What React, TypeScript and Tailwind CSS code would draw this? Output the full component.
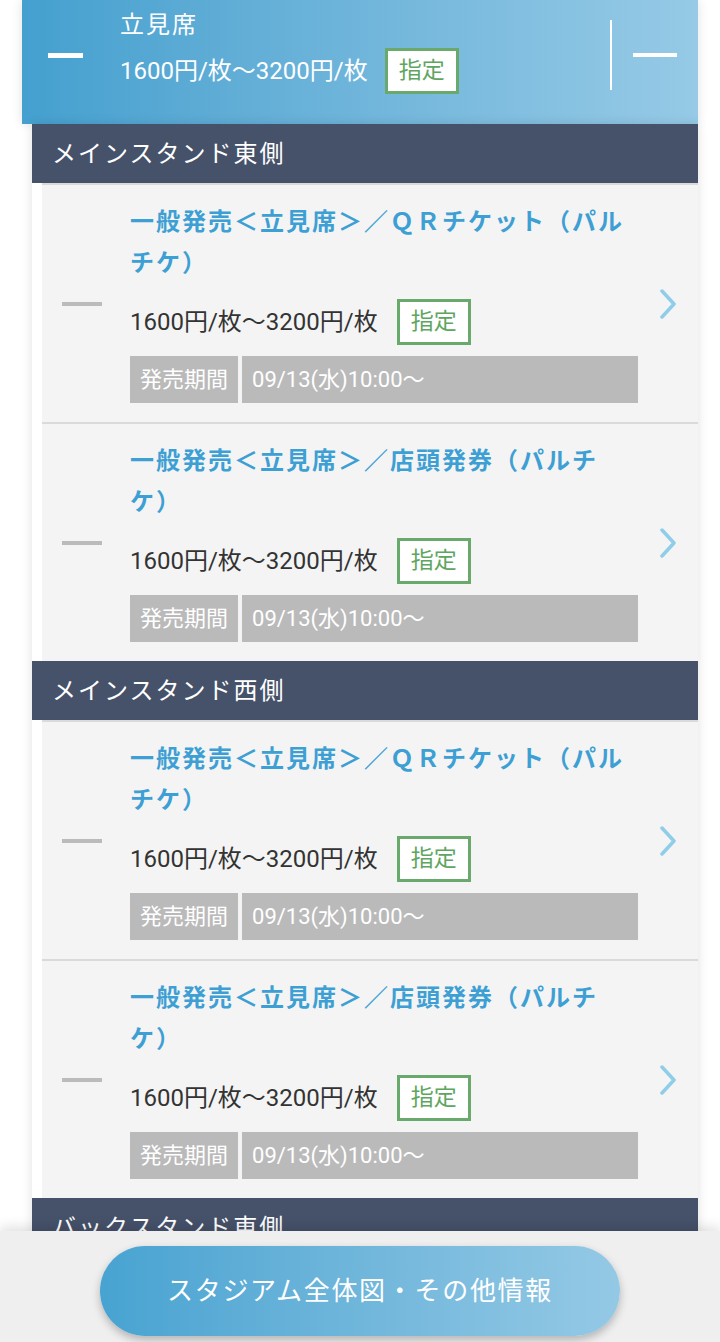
import { ReactNode } from "react";

// ─── Data ───────────────────────────────────────────────────────────────────
const PRICE = "1600円/枚～3200円/枚";
const PERIOD = "09/13(水)10:00～";

const sections = [
    {
        name: "メインスタンド東側",
        items: ["一般発売＜立見席＞／ＱＲチケット（パルチケ）", "一般発売＜立見席＞／店頭発券（パルチケ）"],
    },
    {
        name: "メインスタンド西側",
        items: ["一般発売＜立見席＞／ＱＲチケット（パルチケ）", "一般発売＜立見席＞／店頭発券（パルチケ）"],
    },
    {
        name: "バックスタンド東側",
        items: ["一般発売＜立見席＞／ＱＲチケット（パルチケ）", "一般発売＜立見席＞／店頭発券（パルチケ）"],
    },
];

// ─── Small parts ────────────────────────────────────────────────────────────
function Badge({ children }: { children: ReactNode }) {
    return (
        <span className="flex h-[46px] items-center border-[3px] border-[#69a96b] bg-white px-[11px] text-[23px] text-[#5ea65f]">
            {children}
        </span>
    );
}

function Chevron() {
    return (
        <svg width="18" height="30" viewBox="0 0 18 30" fill="none">
            <polyline points="3,2 15,15 3,28" stroke="#8fcde9" strokeWidth="3.5" strokeLinecap="round" strokeLinejoin="round" />
        </svg>
    );
}

function TicketItem({ title }: { title: string }) {
    return (
        <div className="flex items-center border-t-2 border-[#dadada] bg-[#f4f4f4]">
            <div className="w-[88px] shrink-0 pl-[20px]">
                <div className="h-[4px] w-[40px] bg-[#bbbbbb]" />
            </div>
            <div className="flex-1 pb-[19px] pt-[17px]">
                <p className="pr-[10px] text-[24px] font-bold leading-[41px] tracking-[2px] text-[#3d9fd3]">{title}</p>
                <div className="mt-[15px] flex items-center gap-[19px]">
                    <span className="text-[24px] leading-none text-[#333333]">{PRICE}</span>
                    <Badge>指定</Badge>
                </div>
                <div className="mt-[11px] flex h-[47px] gap-[4px] text-[22px] text-white">
                    <span className="flex items-center bg-[#bababa] px-[10px]">発売期間</span>
                    <span className="flex flex-1 items-center bg-[#bababa] px-[10px]">{PERIOD}</span>
                </div>
            </div>
            <div className="flex w-[60px] shrink-0 justify-center">
                <Chevron />
            </div>
        </div>
    );
}

// ─── Page ───────────────────────────────────────────────────────────────────
export default function App() {
    return (
        <div className="relative h-screen overflow-hidden bg-white font-['Roboto','Noto_Sans_CJK_JP',sans-serif]">
            {/* seat header */}
            <div className="mx-[22px] flex h-[124px] bg-gradient-to-r from-[#44a0cf] to-[#96cae6] text-white shadow-[0_0_10px_rgba(0,0,0,0.12)]">
                <div className="w-[98px] shrink-0 pl-[26px] pt-[53px]">
                    <div className="h-[5px] w-[35px] bg-white" />
                </div>
                <div className="flex-1 pt-[7px]">
                    <p className="text-[24px] leading-[36px] tracking-[2px]">立見席</p>
                    <div className="mt-[5px] flex items-center gap-[17px]">
                        <span className="text-[24px] leading-none">{PRICE}</span>
                        <Badge>指定</Badge>
                    </div>
                </div>
                <div className="flex items-start pt-[20px]">
                    <div className="h-[70px] w-[2px] bg-white" />
                    <div className="mx-[21px] mt-[33px] h-[4px] w-[44px] bg-white" />
                </div>
            </div>

            {/* sections */}
            <div className="ml-[32px] mr-[22px] shadow-[0_0_10px_rgba(0,0,0,0.12)]">
                {sections.map((section) => (
                    <div key={section.name}>
                        <div className="flex h-[59px] items-center bg-[#46526a] pl-[20px] text-[24px] tracking-[2px] text-white">
                            {section.name}
                        </div>
                        <div className="ml-[10px]">
                            {section.items.map((title) => (
                                <TicketItem key={title} title={title} />
                            ))}
                        </div>
                    </div>
                ))}
            </div>

            {/* bottom bar */}
            <div className="absolute bottom-0 left-0 right-0 flex h-[111px] justify-center bg-[#efefef] pt-[15px] shadow-[0_-4px_12px_rgba(0,0,0,0.12)]">
                <button className="flex h-[90px] w-[520px] items-center justify-center rounded-full bg-gradient-to-r from-[#47a3d1] to-[#94c9e5] text-[26px] tracking-[1.7px] text-white shadow-[0_4px_8px_rgba(0,0,0,0.25)]">
                    スタジアム全体図・その他情報
                </button>
            </div>
        </div>
    );
}
